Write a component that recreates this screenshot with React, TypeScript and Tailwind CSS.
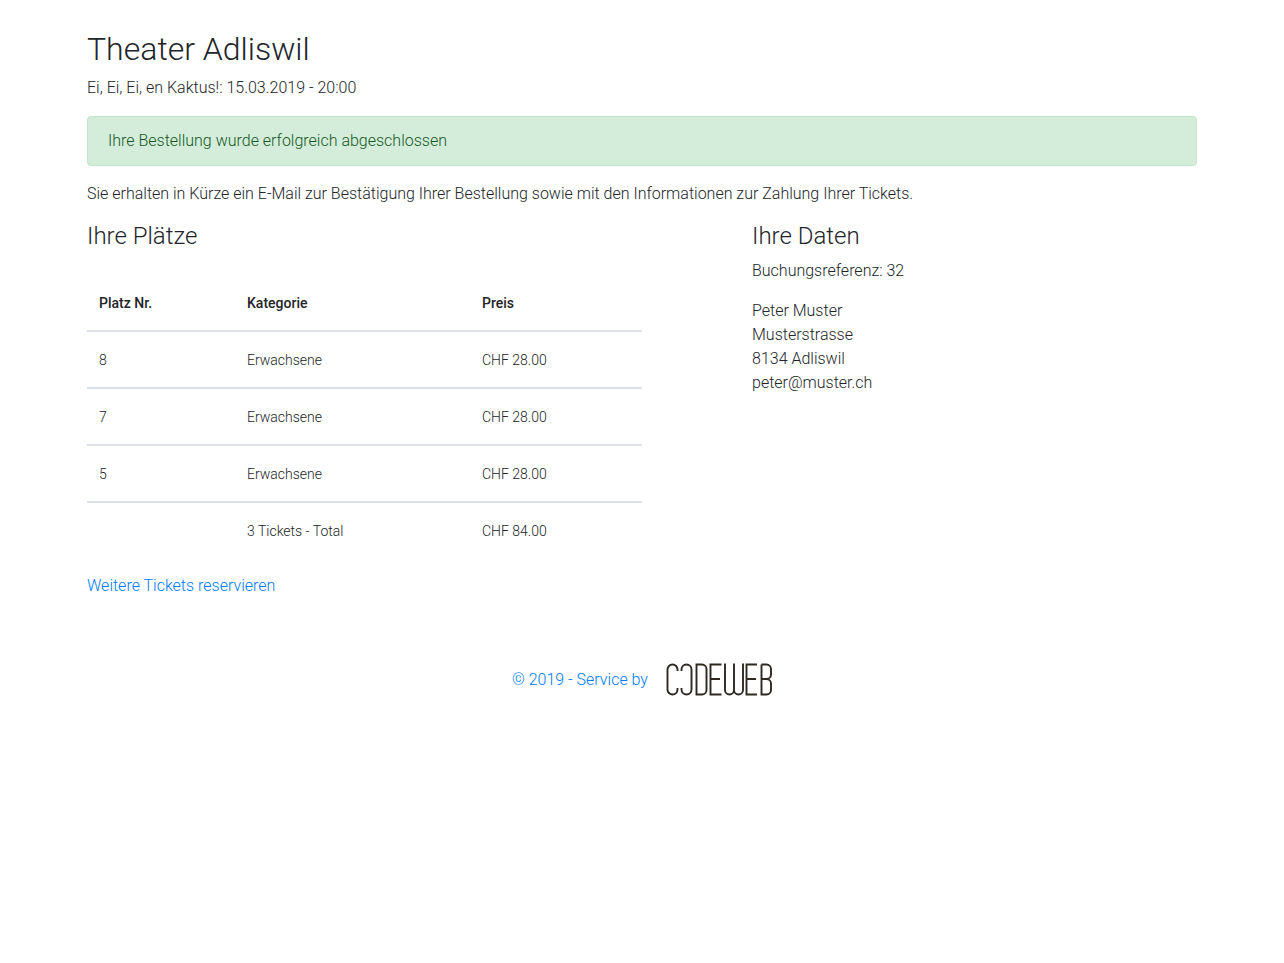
import React from 'react';

interface Seat {
  number: number;
  category: string;
  price: number;
}

const seats: Seat[] = [
  { number: 8, category: 'Erwachsene', price: 28 },
  { number: 7, category: 'Erwachsene', price: 28 },
  { number: 5, category: 'Erwachsene', price: 28 },
];

const formatPrice = (price: number) => `CHF ${price.toFixed(2)}`;

const CodewebLogo: React.FC = () => (
  <svg
    role="img"
    aria-label="Codeweb"
    width="106"
    height="35"
    viewBox="0 0 106 35"
    fill="none"
    stroke="#2d2822"
    strokeWidth="1.9"
  >
    <path d="M11.5 9V7.5a5 5 0 0 0-10 0v20a5 5 0 0 0 10 0V26" />
    <path d="M15.5 9V7.5a5 5 0 0 1 10 0v20a5 5 0 0 1-10 0V26" />
    <path d="M30.5 2.5H36A4.500 4.500 0 0 1 40.5 7v21a4.500 4.500 0 0 1-4.500 4.500h-5.500z" />
    <path d="M55.5 2.500h-11v30h11M44.5 17h9.500" />
    <path d="M59 1.500V28a4.500 4.500 0 0 0 9 0V1.500M68 28a4.500 4.500 0 0 0 9 0V1.500" />
    <path d="M91 2.500H80.500v30H91M80.500 17H90" />
    <path d="M95.500 2.500h5A4.500 4.500 0 0 1 105 7v5.500a4.500 4.500 0 0 1-4.500 4.500h-5M100.500 17a4.500 4.500 0 0 1 4.500 4.500V28a4.500 4.500 0 0 1-4.500 4.500h-5v-30" />
  </svg>
);

const SeatTable: React.FC = () => {
  const total = seats.reduce((sum, seat) => sum + seat.price, 0);

  return (
    <table className="w-full table-fixed border-collapse text-left text-sm leading-5">
      <thead>
        <tr className="border-b-2 border-[#dee2e6]">
          <th className="w-[148px] px-3 pt-[18px] pb-[17px] font-medium">Platz Nr.</th>
          <th className="w-[235px] px-3 pt-[18px] pb-[17px] font-medium">Kategorie</th>
          <th className="px-3 pt-[18px] pb-[17px] font-medium">Preis</th>
        </tr>
      </thead>
      <tbody>
        {seats.map((seat) => (
          <tr key={seat.number} className="border-b-2 border-[#dee2e6]">
            <td className="px-3 pt-[18px] pb-[17px]">{seat.number}</td>
            <td className="px-3 pt-[18px] pb-[17px]">{seat.category}</td>
            <td className="px-3 pt-[18px] pb-[17px]">{formatPrice(seat.price)}</td>
          </tr>
        ))}
        <tr>
          <td className="px-3 pt-[18px] pb-[17px]"></td>
          <td className="px-3 pt-[18px] pb-[17px]">{seats.length} Tickets - Total</td>
          <td className="px-3 pt-[18px] pb-[17px]">{formatPrice(total)}</td>
        </tr>
      </tbody>
    </table>
  );
};

const App: React.FC = () => {
  return (
    <div className="mx-auto max-w-[1140px] px-[15px] pt-[30px] font-['Roboto',sans-serif] text-base font-light text-[#212529]">
      <header>
        <h1 className="mb-2 text-[32px] leading-[38px]">Theater Adliswil</h1>
        <p className="mb-4">Ei, Ei, Ei, en Kaktus!: 15.03.2019 - 20:00</p>
      </header>

      <main>
        <div
          role="alert"
          className="mb-4 rounded border border-[#c3e6cb] bg-[#d4edda] px-5 py-3 text-[#155724]"
        >
          Ihre Bestellung wurde erfolgreich abgeschlossen
        </div>
        <p className="mb-4">
          Sie erhalten in Kürze ein E-Mail zur Bestätigung Ihrer Bestellung sowie mit den
          Informationen zur Zahlung Ihrer Tickets.
        </p>

        <div className="flex flex-col md:flex-row md:gap-[110px]">
          <section className="md:w-1/2">
            <h2 className="mb-6 text-2xl leading-[29px]">Ihre Plätze</h2>
            <SeatTable />
          </section>
          <section>
            <h2 className="mb-2 text-2xl leading-[29px]">Ihre Daten</h2>
            <p className="mb-4">Buchungsreferenz: 32</p>
            <address className="not-italic">
              Peter Muster
              <br />
              Musterstrasse
              <br />
              8134 Adliswil
              <br />
              peter@muster.ch
            </address>
          </section>
        </div>

        <a href="#reservieren" className="mt-4 inline-block text-[#007bff]">
          Weitere Tickets reservieren
        </a>
      </main>

      <footer className="mt-16 flex justify-center">
        <a href="#codeweb" className="flex items-center gap-[18px] text-[#007bff]">
          <span>© 2019 - Service by</span>
          <CodewebLogo />
        </a>
      </footer>
    </div>
  );
};

export default App;
